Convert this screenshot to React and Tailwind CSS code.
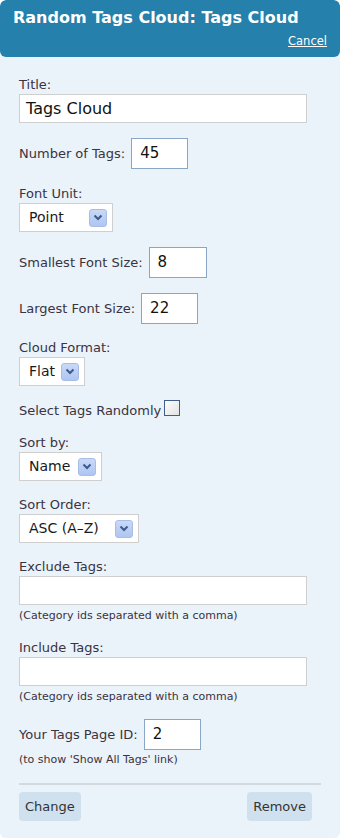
const font = { fontFamily: '"DejaVu Sans", Verdana, sans-serif' }

function Chevron() {
  return (
    <span className="flex h-[18px] w-[18px] items-center justify-center rounded-[3px] border border-[#a7bde6] bg-gradient-to-b from-[#c9d9f8] to-[#aec6f1]">
      <svg width="10" height="7" viewBox="0 0 10 7">
        <path d="M1.5 1.5 L5 5 L8.5 1.5" fill="none" stroke="#3d5a8c" strokeWidth="2" />
      </svg>
    </span>
  )
}

function Select({ value, width }) {
  return (
    <div
      className="mt-[1px] flex h-[29px] items-center justify-between border border-[#cfcfcf] bg-white pl-[9px] pr-[5px] text-[14px] text-[#1a1a1a]"
      style={{ width }}
    >
      <span>{value}</span>
      <Chevron />
    </div>
  )
}

function Label({ children, className = '' }) {
  return <div className={`text-[13px] leading-[16px] text-[#3a3340] ${className}`}>{children}</div>
}

function Inline({ label, value, width, className = '' }) {
  return (
    <div className={`flex items-center gap-[6px] ${className}`}>
      <span className="text-[13px] leading-[16px] text-[#3a3340]">{label}</span>
      <div
        className="flex h-[31px] items-center border border-[#8aa6c6] bg-white px-[8px] text-[15px] text-[#111]"
        style={{ width }}
      >
        {value}
      </div>
    </div>
  )
}

function Wide({ value = '' }) {
  return (
    <div className="mt-[1px] flex h-[29px] w-[288px] items-center border border-[#cfcfcf] bg-white px-[6px] text-[16px] text-[#111]">
      {value}
    </div>
  )
}

function Hint({ children, className = '' }) {
  return <div className={`text-[11px] leading-[14px] text-[#3a3340] ${className}`}>{children}</div>
}

export default function App() {
  return (
    <div className="h-[838px] w-[340px] overflow-hidden rounded-[6px] bg-[#eaf2fa]" style={font}>
      <div className="relative h-[57px] rounded-[6px] bg-[#2580ab] px-[13px] pt-[7px] text-white">
        <div className="text-[16px] font-bold leading-[21px]">Random Tags Cloud: Tags Cloud</div>
        <div className="mt-[6px] text-right text-[11.5px] leading-[14px] underline">Cancel</div>
      </div>

      <div className="px-[19px] pt-[20px]">
        <Label>Title:</Label>
        <Wide value="Tags Cloud" />

        <Inline label="Number of Tags:" value="45" width="57px" className="mt-[15px]" />

        <Label className="mt-[17px]">Font Unit:</Label>
        <Select value="Point" width="94px" />

        <Inline label="Smallest Font Size:" value="8" width="58px" className="mt-[15px]" />
        <Inline label="Largest Font Size:" value="22" width="57px" className="mt-[15px]" />

        <Label className="mt-[16px]">Cloud Format:</Label>
        <Select value="Flat" width="66px" />

        <div className="mt-[14px] flex items-start gap-[3px]">
          <span className="mt-[3px] text-[13px] leading-[16px] text-[#3a3340]">Select Tags Randomly</span>
          <span className="h-[16px] w-[16px] border border-[#3e5f8c] bg-gradient-to-br from-[#fdfdfd] to-[#e2e2e2]" />
        </div>

        <Label className="mt-[16px]">Sort by:</Label>
        <Select value="Name" width="83px" />

        <Label className="mt-[16px]">Sort Order:</Label>
        <Select value="ASC (A–Z)" width="120px" />

        <Label className="mt-[16px]">Exclude Tags:</Label>
        <Wide />
        <Hint className="mt-[4px]">(Category ids separated with a comma)</Hint>

        <Label className="mt-[17px]">Include Tags:</Label>
        <Wide />
        <Hint className="mt-[4px]">(Category ids separated with a comma)</Hint>

        <Inline label="Your Tags Page ID:" value="2" width="57px" className="mt-[15px]" />
        <Hint className="mt-[3px]">(to show 'Show All Tags' link)</Hint>

        <div className="mt-[16px] h-[2px] w-[302px] bg-[#d3d9df]" />

        <div className="mt-[7px] flex w-[293px] justify-between">
          <button className="h-[29px] rounded-[4px] bg-[#cfe1ef] px-[6px] text-[13px] text-[#333]">Change</button>
          <button className="h-[29px] rounded-[4px] bg-[#cfe1ef] px-[6px] text-[13px] text-[#333]">Remove</button>
        </div>
      </div>
    </div>
  )
}
